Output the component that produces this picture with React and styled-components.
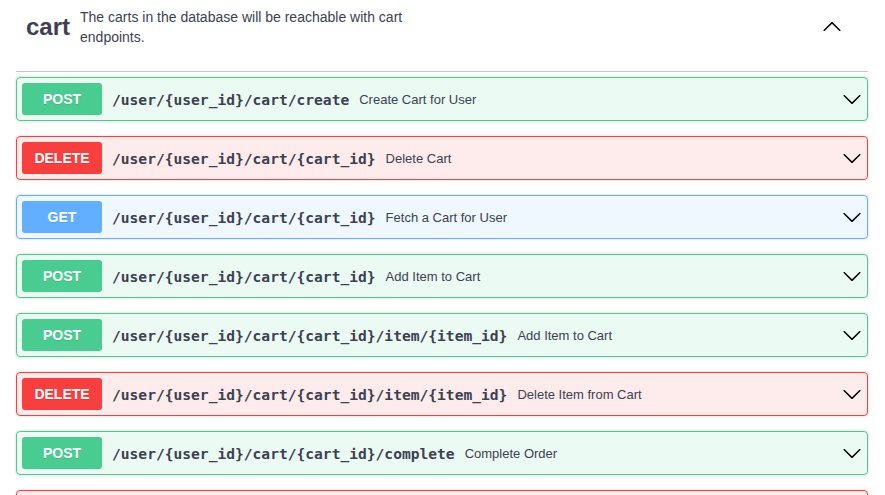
import React from 'react'
import styled, { createGlobalStyle } from 'styled-components'

const GlobalStyle = createGlobalStyle`
  body {
    margin: 0;
    background: #fff;
    font-family: "Liberation Sans", Arial, sans-serif;
    overflow: hidden;
  }
`

const methods = {
  post: { color: '#49cc90', bg: 'rgba(73,204,144,.1)' },
  delete: { color: '#f93e3e', bg: 'rgba(249,62,62,.1)' },
  get: { color: '#61affe', bg: 'rgba(97,175,254,.1)' },
}

const endpoints = [
  { method: 'post', path: '/user/{user_id}/cart/create', summary: 'Create Cart for User' },
  { method: 'delete', path: '/user/{user_id}/cart/{cart_id}', summary: 'Delete Cart' },
  { method: 'get', path: '/user/{user_id}/cart/{cart_id}', summary: 'Fetch a Cart for User' },
  { method: 'post', path: '/user/{user_id}/cart/{cart_id}', summary: 'Add Item to Cart' },
  { method: 'post', path: '/user/{user_id}/cart/{cart_id}/item/{item_id}', summary: 'Add Item to Cart' },
  { method: 'delete', path: '/user/{user_id}/cart/{cart_id}/item/{item_id}', summary: 'Delete Item from Cart' },
  { method: 'post', path: '/user/{user_id}/cart/{cart_id}/complete', summary: 'Complete Order' },
  { method: 'delete', path: '/user/{user_id}/cart/{cart_id}/complete', summary: 'Cancel Order' },
]

function Arrow({ up }) {
  return (
    <svg width="20" height="20" viewBox="0 0 20 20" style={up ? { transform: 'rotate(180deg)' } : undefined}>
      <path
        fill="#000"
        d="M17.418 6.109c.272-.268.709-.268.979 0s.271.701 0 .969l-7.908 7.83c-.27.268-.707.268-.979 0l-7.908-7.83c-.27-.268-.27-.701 0-.969.271-.268.709-.268.979 0L10 13.25l7.418-7.141z"
      />
    </svg>
  )
}

function App() {
  return (
    <Section>
      <GlobalStyle />
      <TagHeader>
        <h3>cart</h3>
        <small>The carts in the database will be reachable with cart endpoints.</small>
        <Toggle>
          <Arrow up />
        </Toggle>
      </TagHeader>
      {endpoints.map((e, i) => (
        <Block key={i} method={e.method}>
          <Badge method={e.method}>{e.method.toUpperCase()}</Badge>
          <Path>{e.path}</Path>
          <Summary>{e.summary}</Summary>
          <Toggle>
            <Arrow />
          </Toggle>
        </Block>
      ))}
    </Section>
  )
}

const Section = styled.div`
  padding: 0 17px 0 16px;
  color: #3b4151;
`

const TagHeader = styled.div`
  display: flex;
  align-items: center;
  height: 54px;
  padding: 0 26px 17px 10px;
  margin: 0 0 5px;
  border-bottom: 1px solid rgba(59, 65, 81, 0.3);

  h3 {
    margin: 0;
    font-size: 24px;
    font-weight: 700;
    color: #3b4151;
  }

  small {
    flex: 1;
    padding: 0 10px;
    max-width: 330px;
    font-size: 14px;
    line-height: 20px;
    margin-right: auto;
  }
`

const Toggle = styled.div`
  display: flex;
  align-items: center;
  margin-left: auto;
`

const Block = styled.div`
  display: flex;
  align-items: center;
  padding: 5px;
  margin: 0 0 15px;
  border: 1px solid ${p => methods[p.method].color};
  border-radius: 4px;
  background: ${p => methods[p.method].bg};
  box-shadow: 0 0 3px rgba(0, 0, 0, 0.19);
`

const Badge = styled.span`
  min-width: 80px;
  padding: 6px 0;
  border-radius: 3px;
  background: ${p => methods[p.method].color};
  color: #fff;
  font-size: 14px;
  font-weight: 700;
  line-height: 20px;
  text-align: center;
  text-shadow: 0 1px 0 rgba(0, 0, 0, 0.1);
`

const Path = styled.span`
  padding: 0 10px;
  font-family: "DejaVu Sans Mono", monospace;
  font-size: 14.6px;
  font-weight: 700;
  color: #3b4151;
`

const Summary = styled.span`
  font-size: 13px;
  color: #3b4151;
`

export default App
